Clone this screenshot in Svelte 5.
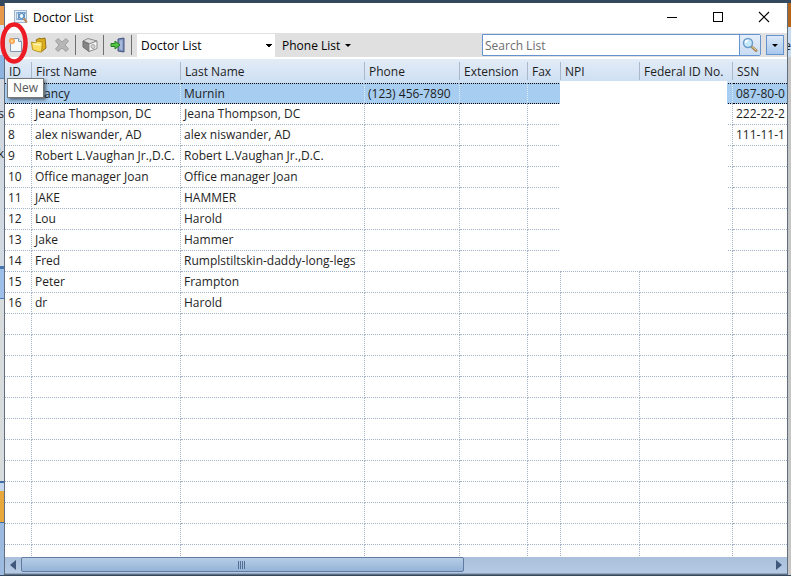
<script>
  const columns = [
    { key: "id", label: "ID", width: 27 },
    { key: "first", label: "First Name", width: 149 },
    { key: "last", label: "Last Name", width: 184 },
    { key: "phone", label: "Phone", width: 95 },
    { key: "ext", label: "Extension", width: 68 },
    { key: "fax", label: "Fax", width: 33 },
    { key: "npi", label: "NPI", width: 79 },
    { key: "federal", label: "Federal ID No.", width: 93 },
    { key: "ssn", label: "SSN" },
  ];

  const doctors = [
    { id: "", first: "Nancy", last: "Murnin", phone: "(123) 456-7890", ssn: "087-80-0" },
    { id: 6, first: "Jeana Thompson, DC", last: "Jeana Thompson, DC", ssn: "222-22-2" },
    { id: 8, first: "alex niswander, AD", last: "alex niswander, AD", ssn: "111-11-1" },
    { id: 9, first: "Robert L.Vaughan Jr.,D.C.", last: "Robert L.Vaughan Jr.,D.C." },
    { id: 10, first: "Office manager Joan", last: "Office manager Joan" },
    { id: 11, first: "JAKE", last: "HAMMER" },
    { id: 12, first: "Lou", last: "Harold" },
    { id: 13, first: "Jake", last: "Hammer" },
    { id: 14, first: "Fred", last: "Rumplstiltskin-daddy-long-legs" },
    { id: 15, first: "Peter", last: "Frampton" },
    { id: 16, first: "dr", last: "Harold" },
  ];

  // blank rows carry the grid lines down to the scroll bar
  const rows = [...doctors, ...Array.from({ length: 12 }, () => ({}))];

  let selected = $state(0);
  let list = $state("Doctor List");
  let search = $state("");
</script>

<div class="desktop">
  <div class="backdrop left"><span class="s">s</span><span class="k">k</span></div>
  <div class="window">
    <header class="titlebar">
      <svg class="app-icon" width="14" height="14" viewBox="0 0 14 14">
        <rect x="0.5" y="0.5" width="12" height="12" fill="#e3edf6" stroke="#9fb6cf" />
        <path d="M2 3h2M2 5h1M2 7h1M2 9h2M10 3h2M11 9h1" stroke="#5784b5" />
        <rect x="4.5" y="2.5" width="6" height="7" fill="#b9d8f0" stroke="#6f9cc8" />
        <circle cx="7.5" cy="6" r="2.5" fill="#e8f7ff" stroke="#3e78b4" />
        <path d="M9.5 8.5l3.5 4" stroke="#c18d60" stroke-width="2" />
      </svg>
      <h1>Doctor List</h1>
      <div class="caption-buttons">
        <button aria-label="Minimize">
          <svg width="12" height="12" viewBox="0 0 12 12"><path d="M1 6.5h10" stroke="#000" /></svg>
        </button>
        <button aria-label="Maximize">
          <svg width="12" height="12" viewBox="0 0 12 12"><rect x="1.5" y="1.5" width="9" height="9" fill="none" stroke="#000" /></svg>
        </button>
        <button aria-label="Close">
          <svg width="12" height="12" viewBox="0 0 12 12"><path d="M1 1l10 10M11 1L1 11" stroke="#000" stroke-width="1.1" /></svg>
        </button>
      </div>
    </header>

    <div class="toolbar">
      <div class="tools">
        <button class="new" aria-label="New" aria-describedby="new-tip">
          <svg width="16" height="16" viewBox="0 0 16 16">
            <path d="M2.5 1.5h8l3 3v10h-11z" fill="#f5f8fd" stroke="#8296b5" />
            <path d="M10.5 1.5v3h3" fill="#dbe5f3" stroke="#8296b5" />
            <circle cx="4" cy="4" r="3" fill="#f6a24d" />
            <circle cx="4" cy="4" r="1.5" fill="#ffd58a" />
          </svg>
          <svg class="ring" width="28" height="42" viewBox="0 0 28 42">
            <ellipse cx="14" cy="21" rx="11.5" ry="18.500" fill="none" stroke="#ed1c24" stroke-width="4.500" />
          </svg>
          <span class="tip" id="new-tip" role="tooltip">New</span>
        </button>
        <button aria-label="Open">
          <svg width="16" height="16" viewBox="0 0 16 16">
            <path d="M5 3l4-2 1 1 4-1 1 10-5 4z" fill="#dfae1c" stroke="#94740f" />
            <path d="M.500 5l4 1 2-2 5 1-1 10-4-.500-5-2z" fill="#fbe060" stroke="#b8921a" />
            <path d="M2.500 7l7 1" stroke="#fff6b8" stroke-width="1.500" />
          </svg>
        </button>
        <button aria-label="Delete">
          <svg width="16" height="16" viewBox="0 0 16 16">
            <path d="M1.500 4l2.500-2.500 4 3.500 4-3.500L14.500 4 11 8l3.500 4-2.500 2.500L8 11l-4 3.500L1.500 12 5 8z" fill="#b6b6b6" stroke="#a0a0a0" />
          </svg>
        </button>
        <span class="rule"></span>
        <button aria-label="Box">
          <svg width="16" height="16" viewBox="0 0 16 16">
            <path d="M1 4l5-2.500 9 2.500-7 3z" fill="#dedede" stroke="#8b8b8b" />
            <path d="M1 4l6 3v7.500L1 10z" fill="#858585" stroke="#6d6d6d" />
            <path d="M7 7l8-3v7.500l-8 3z" fill="#f7f7f7" stroke="#8b8b8b" />
            <circle cx="11" cy="9.500" r="2" fill="#d6d6d6" stroke="#a2a2a2" />
          </svg>
        </button>
        <span class="rule"></span>
        <button aria-label="Exit">
          <svg width="16" height="16" viewBox="0 0 16 16">
            <path d="M8 2l6-1v14l-6-1z" fill="#7b8dbb" stroke="#45547f" />
            <path d="M9.5 3.5l3-.5v10l-3-.5z" fill="#a9b9dc" />
            <path d="M1 6.500h4V4l5 4-5 4V9.500H1z" fill="#57c443" stroke="#218020" />
          </svg>
        </button>
        <span class="rule"></span>
      </div>
      <select class="list-picker" aria-label="List" bind:value={list}>
        <option>Doctor List</option>
      </select>
      <button class="phone-list">
        Phone List
        <svg width="6" height="3" viewBox="0 0 6 3"><path d="M0 0h6L3 3z" /></svg>
      </button>
      <form class="search" onsubmit={(e) => e.preventDefault()}>
        <input type="text" aria-label="Search List" placeholder="Search List" bind:value={search} />
        <button aria-label="Search">
          <svg width="16" height="16" viewBox="0 0 16 16">
            <path d="M9.500 9.500l4.500 4" stroke="#a78757" stroke-width="3" stroke-linecap="round" />
            <path d="M10 9.500l4 3.500" stroke="#e8d3a4" stroke-linecap="round" />
            <circle cx="6" cy="6" r="4.500" fill="#c5e8fb" stroke="#6d9cc9" stroke-width="1.500" />
            <path d="M3.500 6A2.500 2.500 0 0 1 6 3.500" fill="none" stroke="#fff" stroke-width="1.500" />
          </svg>
        </button>
      </form>
      <button class="more" aria-label="More">
        <svg width="6" height="3" viewBox="0 0 6 3"><path d="M0 0h6L3 3z" /></svg>
      </button>
    </div>

    <div class="grid">
      <table>
        <colgroup>
          {#each columns as col}
            <col style={col.width ? `width: ${col.width}px` : undefined} />
          {/each}
        </colgroup>
        <thead>
          <tr>
            {#each columns as col}
              <th scope="col">{col.label}</th>
            {/each}
          </tr>
        </thead>
        <tbody>
          {#each rows as row, i}
            <tr class:selected={i === selected} onclick={() => (selected = i)}>
              {#each columns as col}
                <td>{row[col.key] ?? ""}</td>
              {/each}
            </tr>
          {/each}
        </tbody>
      </table>
      <div class="blank"></div>
    </div>

    <div class="scrollbar">
      <button aria-label="Scroll left">
        <svg width="6" height="10" viewBox="0 0 6 10"><path d="M6 0v10L0 5z" /></svg>
      </button>
      <div class="track">
        <div class="thumb">
          <svg width="8" height="8" viewBox="0 0 8 8"><path d="M.5 0v8M2.500 0v8M4.500 0v8M6.500 0v8" stroke="#536f96" /></svg>
        </div>
      </div>
      <button aria-label="Scroll right">
        <svg width="6" height="10" viewBox="0 0 6 10"><path d="M0 0v10l6-5z" /></svg>
      </button>
    </div>
  </div>
  <div class="backdrop right"><span class="e">e</span></div>
</div>

<style>
  :global(body) {
    margin: 0;
  }
  .desktop {
    box-sizing: border-box;
    display: flex;
    height: 100vh;
    padding: 3px 0 1px;
    background: #34495e;
    font-family: "Open Sans", "Noto Sans", sans-serif;
    font-size: 12px;
    color: #1e1e1e;
    overflow: hidden;
  }
  .backdrop {
    position: relative;
    overflow: hidden;
    line-height: 14px;
  }
  .backdrop span {
    position: absolute;
  }
  .left {
    width: 4px;
    background: linear-gradient(
      #34495e 0 3px, #e79a4c 3px 22px, #dbe6f2 22px 52px, #8fb4e0 52px 75px,
      #5d82ad 75px 76px, #d2d9e0 76px 263px, #4677b0 263px 266px, #9dbfe8 266px 295px,
      #4677b0 295px 296px, #d8dcdc 296px 478px, #3f6ea5 478px 480px, #c4d7ee 480px 488px,
      #e9a83c 488px 519px, #3f6ea5 519px 520px, #9dbbe0 520px
    );
  }
  .s {
    right: 0;
    top: 104px;
  }
  .k {
    right: 0;
    top: 144px;
  }
  .right {
    width: 3px;
    background: linear-gradient(#b4651c 0 24px, #c7dcf0 24px 54px, #c5c5c5 54px);
  }
  .e {
    right: 0;
    top: 36px;
  }
  .window {
    flex: 1;
    min-width: 0;
    box-sizing: border-box;
    display: flex;
    flex-direction: column;
    border: solid #5f6f80;
    border-width: 0 1px 1px;
    background: #fff;
  }
  button {
    display: flex;
    align-items: center;
    justify-content: center;
    padding: 0;
    border: 0;
    background: none;
    font: inherit;
    color: inherit;
  }
  .titlebar {
    box-sizing: border-box;
    display: flex;
    align-items: center;
    height: 30px;
    padding: 0 0 2px 9px;
    gap: 5px;
  }
  h1 {
    margin: 0;
    font-size: 12px;
    font-weight: 400;
    color: #000;
  }
  .caption-buttons {
    display: flex;
    margin-left: auto;
  }
  .caption-buttons button {
    width: 46px;
    height: 28px;
  }
  .toolbar {
    display: flex;
    align-items: center;
    height: 24px;
    margin-bottom: 2px;
    background: #e0e0e0;
  }
  .tools {
    display: flex;
    align-items: center;
    gap: 4px;
    padding-left: 1px;
  }
  .tools button {
    width: 19px;
    height: 22px;
  }
  .rule {
    width: 1px;
    height: 20px;
    background: #6f6f6f;
  }
  .new {
    position: relative;
  }
  .ring {
    position: absolute;
    left: -6px;
    top: -12px;
    z-index: 3;
  }
  .tip {
    position: absolute;
    left: 1px;
    top: 44px;
    z-index: 2;
    padding: 0 5px;
    border: 1px solid #767676;
    background: #fff;
    box-shadow: 2px 2px 3px rgba(0, 0, 0, 0.5);
    line-height: 18px;
    color: #575757;
  }
  .list-picker {
    width: 138px;
    height: 23px;
    margin-left: 5px;
    padding: 0 0 0 4px;
    border: 0;
    border-radius: 0;
    appearance: none;
    background:
      conic-gradient(from -45deg at 50% 100%, #000 90deg, transparent 0) right 3px center / 6px 3px no-repeat,
      #fff;
    font: inherit;
    color: #000;
  }
  .phone-list {
    gap: 5px;
    margin-left: 7px;
    color: #000;
  }
  .search {
    display: flex;
    flex: 0 1 279px;
    box-sizing: border-box;
    height: 22px;
    margin-left: auto;
    border: 1px solid #6593cf;
    border-radius: 0 2px 2px 0;
    background: #fff;
  }
  .search input {
    flex: 1;
    min-width: 0;
    padding: 0 2px;
    border: 0;
    outline: 0;
    background: none;
    font: inherit;
  }
  .search input::placeholder {
    color: #6d6d6d;
  }
  .search button {
    width: 21px;
    border-left: 1px solid #6593cf;
    background: linear-gradient(#e6effa, #c9dcf3);
  }
  .more {
    box-sizing: border-box;
    width: 18px;
    height: 20px;
    margin: 0 3px 0 5px;
    border: 1px solid #6593cf;
    background: linear-gradient(#dce9f8, #a9c8ee);
  }
  .grid {
    position: relative;
    flex: 1;
    min-height: 0;
    overflow: hidden;
  }
  table {
    width: 100%;
    table-layout: fixed;
    border-collapse: separate;
    border-spacing: 0;
  }
  thead tr {
    background: linear-gradient(#e3ecf7, #cddff3);
  }
  th {
    box-sizing: border-box;
    height: 24px;
    padding: 0 0 0 4px;
    background: linear-gradient(#a9b9cb, #a9b9cb) right center / 1px 18px no-repeat;
    font-weight: 400;
    text-align: left;
    white-space: nowrap;
  }
  th:last-child {
    background: none;
  }
  td {
    box-sizing: border-box;
    height: 21px;
    padding: 0 0 0 3px;
    border: dotted #a3b4c9;
    border-width: 0 1px 1px 0;
    line-height: 16px;
    white-space: nowrap;
    overflow: hidden;
  }
  td:last-child {
    border-right: 0;
  }
  .selected td {
    border-top-width: 1px;
    border-color: #000 #dfeefb #000 #000;
    background: #a7cdf0;
  }
  .blank {
    position: absolute;
    left: 555px;
    top: 22px;
    width: 167px;
    height: 190px;
    background: #fff;
  }
  .scrollbar {
    display: flex;
    height: 16px;
    background: linear-gradient(#a9bfdb, #b6cae4);
    border-bottom: 1px solid #8ea4bf;
    fill: #3f587c;
  }
  .scrollbar button {
    width: 16px;
  }
  .track {
    flex: 1;
  }
  .thumb {
    display: flex;
    align-items: center;
    justify-content: center;
    box-sizing: border-box;
    width: 59%;
    height: 15px;
    border: 1px solid #607b9f;
    border-radius: 2px;
    background: linear-gradient(#b7cde7, #95b3d7);
  }
</style>
